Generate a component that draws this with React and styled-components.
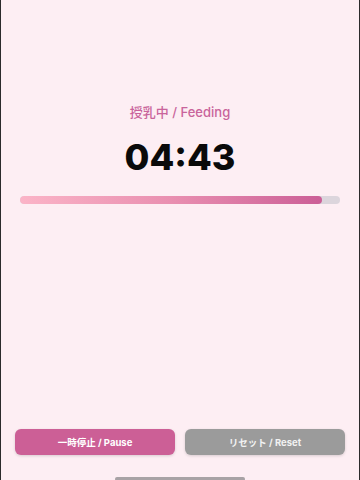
import React from 'react'
import styled, { createGlobalStyle } from 'styled-components'

const GlobalStyle = createGlobalStyle`
  html, body {
    margin: 0;
    padding: 0;
    background: #fdeef3;
  }
  * { box-sizing: border-box; }
`;

export default function App() {
    const elapsed = 283;
    const total = 300;
    const pct = Math.min(100, (elapsed / total) * 100);
    const mm = String(Math.floor(elapsed / 60)).padStart(2, '0');
    const ss = String(elapsed % 60).padStart(2, '0');

    return (
        <>
            <GlobalStyle />
            <Screen>
                <Main>
                    <Title>授乳中 / Feeding</Title>
                    <Timer>{mm}:{ss}</Timer>
                    <Track>
                        <Fill style={{ width: `${pct}%` }} />
                    </Track>
                </Main>
                <Footer>
                    <ButtonRow>
                        <ActionButton $variant="primary">一時停止 / Pause</ActionButton>
                        <ActionButton $variant="muted">リセット / Reset</ActionButton>
                    </ButtonRow>
                    <HomeIndicator />
                </Footer>
            </Screen>
        </>
    )
}

const Screen = styled.div`
  height: 480px;
  display: flex;
  flex-direction: column;
  background: #fdeef3;
  border-left: 1px solid #2b2b2b;
  border-right: 1px solid #2b2b2b;
  overflow: hidden;
  font-family: Inter, "Noto Sans CJK JP", sans-serif;
`;

const Main = styled.main`
  flex: 1;
  padding: 104px 19px 0;
  display: flex;
  flex-direction: column;
  align-items: stretch;
`;

const Title = styled.h2`
  margin: 0;
  text-align: center;
  font-size: 13px;
  line-height: 16px;
  font-weight: 500;
  color: #c9649b;
`;

const Timer = styled.div`
  margin-top: 15px;
  text-align: center;
  font-size: 36px;
  line-height: 44px;
  font-weight: 800;
  color: #0a0a0a;
`;

const Track = styled.div`
  margin-top: 17px;
  height: 8px;
  border-radius: 4px;
  background: #dcd5dc;
  overflow: hidden;
`;

const Fill = styled.div`
  height: 100%;
  border-radius: 4px;
  background: linear-gradient(90deg, #fbb4c7 0%, #e98fb0 50%, #cb5e96 100%);
`;

const Footer = styled.footer`
  display: flex;
  flex-direction: column;
  align-items: center;
`;

const ButtonRow = styled.div`
  width: 100%;
  display: grid;
  grid-template-columns: 1fr 1fr;
  gap: 10px;
  padding: 0 14px;
`;

const ActionButton = styled.button`
  height: 26px;
  border: none;
  border-radius: 6px;
  font-family: inherit;
  font-size: 9.5px;
  font-weight: 700;
  background: ${p => (p.$variant === 'primary' ? '#cc5f96' : '#9b9b9b')};
  color: ${p => (p.$variant === 'primary' ? '#fff' : '#f2f2f2')};
  box-shadow: 0 1px 3px rgba(0, 0, 0, 0.15);
  cursor: pointer;
`;

const HomeIndicator = styled.div`
  margin-top: 21px;
  width: 130px;
  height: 4px;
  border-radius: 2px;
  background: #a8a2a5;
  transform: translateY(1px);
`;
